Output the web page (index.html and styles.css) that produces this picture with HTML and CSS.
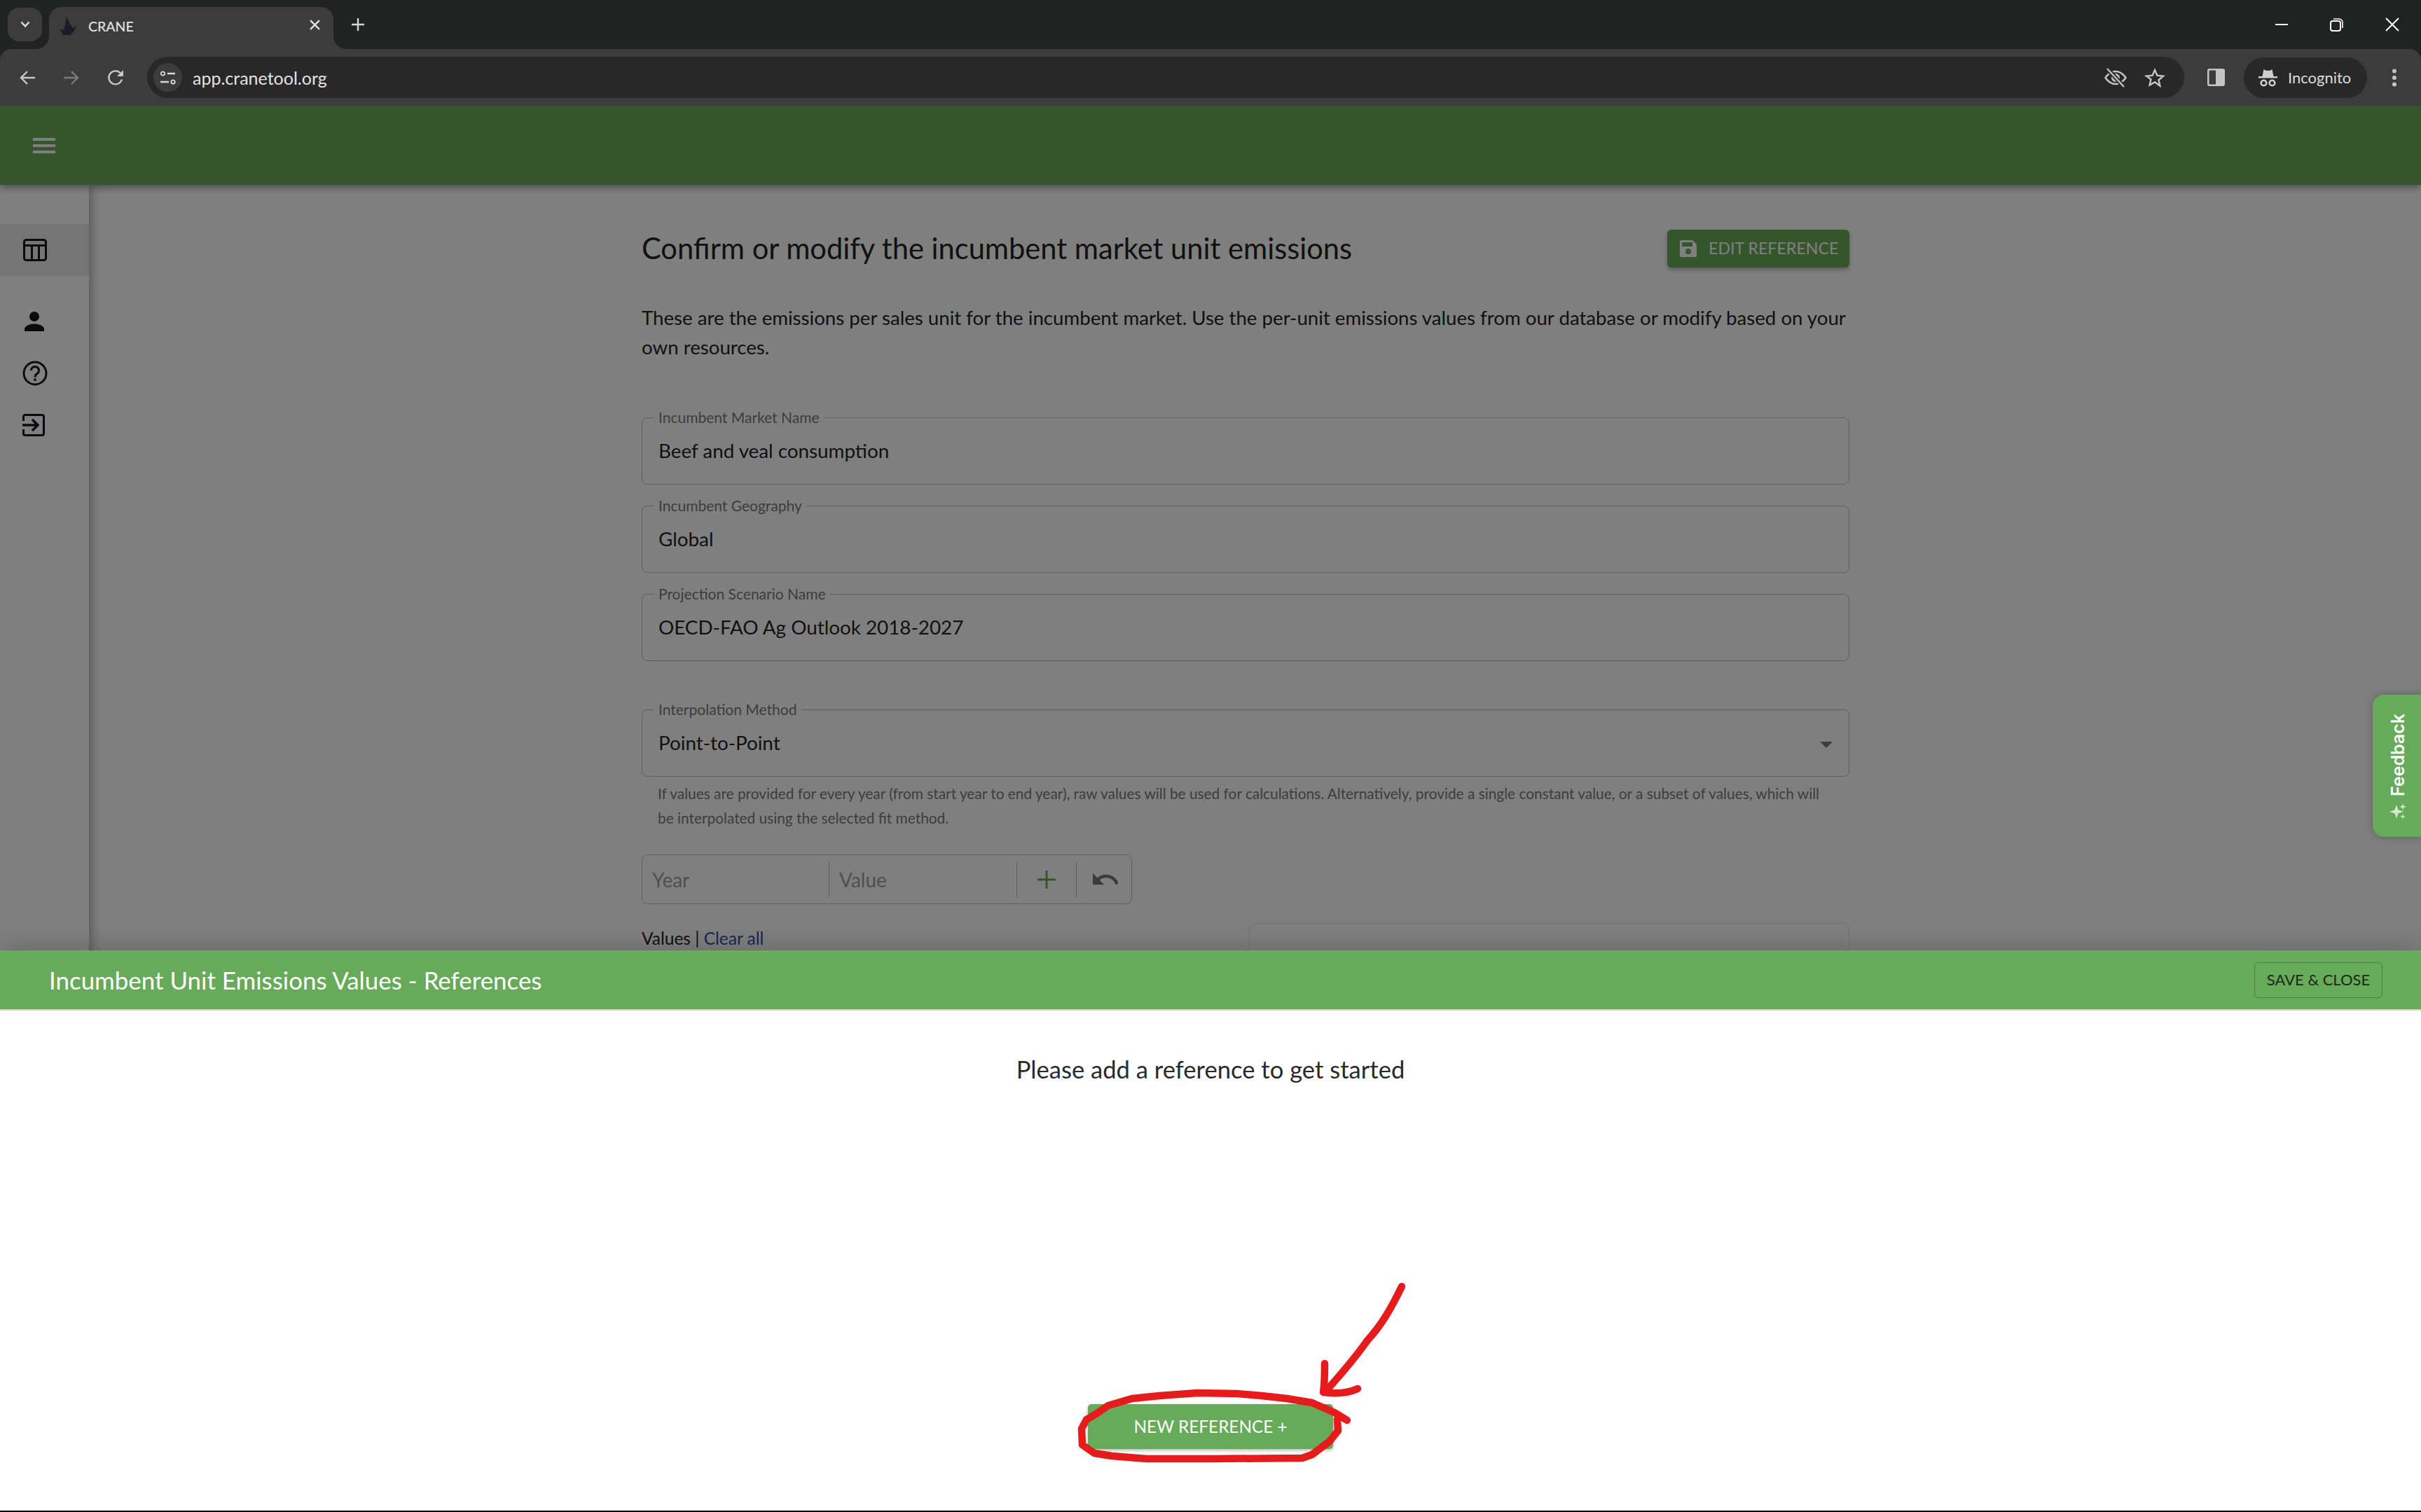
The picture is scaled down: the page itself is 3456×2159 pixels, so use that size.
FILE: index.html
```html
<!DOCTYPE html>
<html lang="en">
<head>
<meta charset="utf-8">
<title>CRANE</title>
<link rel="stylesheet" href="styles.css">
</head>
<body>
<div class="browser">
  <div class="tabstrip">
    <div class="tabsearch"><svg width="14" height="10" viewBox="0 0 14 10"><path d="M1.500 1.500 7 7.500l5.500-6" fill="none" stroke="#e3e3e3" stroke-width="2.400"/></svg></div>
    <div class="tab">
      <svg class="favicon" width="28" height="28" viewBox="0 0 28 28"><path d="M11 1l6 12 3 4 6-3-5 8-4 5H6L1 19l6 1z" fill="#1d1b2b"/></svg>
      <span class="tabtitle">CRANE</span>
      <svg class="tabclose" width="15" height="15" viewBox="0 0 14 14"><path d="M1 1l12 12M13 1 1 13" stroke="#e3e3e3" stroke-width="2.200"/></svg>
    </div>
    <svg class="newtab" width="18" height="18" viewBox="0 0 18 18"><path d="M9 0v18M0 9h18" stroke="#d8d8d8" stroke-width="2.400"/></svg>
    <div class="winctrls">
      <svg width="20" height="20" viewBox="0 0 20 20"><path d="M1 10h18" stroke="#fff" stroke-width="2"/></svg>
      <svg width="20" height="20" viewBox="0 0 20 20"><rect x="1" y="5" width="14" height="14" rx="3" fill="none" stroke="#fff" stroke-width="2"/><path d="M5 2h8a5 5 0 0 1 5 5v8" fill="none" stroke="#fff" stroke-width="1.600"/></svg>
      <svg width="20" height="20" viewBox="0 0 20 20"><path d="M1 1l18 18M19 1 1 19" stroke="#fff" stroke-width="2"/></svg>
    </div>
  </div>
  <div class="toolbar">
    <svg class="navicon" width="24" height="24" viewBox="0 0 24 24"><path d="M23 12H3M12 3l-9 9 9 9" fill="none" stroke="#c8c8c8" stroke-width="2.400"/></svg>
    <svg class="navicon" width="24" height="24" viewBox="0 0 24 24"><path d="M1 12h20M12 3l9 9-9 9" fill="none" stroke="#7c7c7c" stroke-width="2.400"/></svg>
    <svg class="navicon" width="24" height="24" viewBox="0 0 24 24"><path d="M21 14.500A9.500 9.500 0 1 1 18.500 5L21 7.500" fill="none" stroke="#c8c8c8" stroke-width="2.400"/><path d="M23 1v9h-9z" fill="#c8c8c8"/></svg>
    <div class="omnibox">
      <div class="sitebtn"><svg width="22" height="20" viewBox="0 0 22 20"><circle cx="3.500" cy="4" r="2.700" fill="none" stroke="#d8d8d8" stroke-width="1.800"/><path d="M10 4h11M0 16h12" stroke="#d8d8d8" stroke-width="2.400"/><circle cx="18" cy="16" r="2.700" fill="none" stroke="#d8d8d8" stroke-width="1.800"/></svg></div>
      <span class="url">app.cranetool.org</span>
      <svg class="omniicon" width="32" height="28" viewBox="0 0 32 28"><path d="M1.500 14S7 5 16 5s14.500 9 14.500 9S25 23 16 23 1.500 14 1.500 14z" fill="none" stroke="#c4c4c4" stroke-width="2.400"/><circle cx="16" cy="14" r="6" fill="#c4c4c4"/><path d="M4 1l24 26" stroke="#282828" stroke-width="6"/><path d="M4 1l24 26" stroke="#c4c4c4" stroke-width="2.400"/></svg>
      <svg class="omniicon" width="30" height="28" viewBox="0 0 30 28"><path d="M15 3l3.400 7.800 8.600.8-6.500 5.700 1.900 8.300L15 20.300l-7.400 4.300 1.900-8.300L3 11.600l8.600-.8z" fill="none" stroke="#c4c4c4" stroke-width="2.400"/></svg>
    </div>
    <svg class="sidepanel" width="25" height="25" viewBox="0 0 25 25"><rect x="1.250" y="1.250" width="22.500" height="22.500" rx="2" fill="none" stroke="#c4c4c4" stroke-width="2.500"/><rect x="12" y="1" width="12" height="23" fill="#c4c4c4"/></svg>
    <div class="incognito">
      <svg width="27" height="26" viewBox="0 0 27 26"><path d="M7.500 1l3 1.800h6L19.500 1l2 10h-16zM0 11h27v2.400H0z" fill="#d0d0d0"/><circle cx="7.500" cy="20.500" r="3.800" fill="none" stroke="#d0d0d0" stroke-width="2.600"/><circle cx="19.500" cy="20.500" r="3.800" fill="none" stroke="#d0d0d0" stroke-width="2.600"/></svg>
      <span>Incognito</span>
    </div>
    <svg class="kebab" width="8" height="26" viewBox="0 0 8 26"><circle cx="4" cy="3.500" r="3" fill="#c4c4c4"/><circle cx="4" cy="13" r="3" fill="#c4c4c4"/><circle cx="4" cy="22.500" r="3" fill="#c4c4c4"/></svg>
  </div>
</div>

<div class="app">
  <header class="appbar">
    <svg width="32" height="22" viewBox="0 0 32 22"><path d="M0 2h32M0 11h32M0 20h32" stroke="#fff" stroke-width="4"/></svg>
  </header>
  <div class="workspace">
    <nav class="sidebar">
      <div class="sideitem sideitem-active"><svg width="34" height="32" viewBox="0 0 34 32"><rect x="1.500" y="1.500" width="31" height="29" rx="3" fill="none" stroke="#14141f" stroke-width="3"/><path d="M2 9.500h30M12.500 9v21M22.500 9v21" stroke="#14141f" stroke-width="3"/></svg></div>
      <div class="sideitem sideitem-person"><svg width="28" height="28" viewBox="0 0 28 28"><circle cx="14" cy="7" r="7" fill="#14141f"/><path d="M0 28v-3c0-5 8-7.500 14-7.500S28 20 28 25v3z" fill="#14141f"/></svg></div>
      <div class="sideitem"><svg width="36" height="36" viewBox="0 0 36 36"><circle cx="18" cy="18" r="16" fill="none" stroke="#14141f" stroke-width="3"/><path d="M12.500 14a5.500 5.500 0 1 1 8.500 4.600c-2 1.400-3 2.400-3 4.900" fill="none" stroke="#14141f" stroke-width="3"/><rect x="16.400" y="25.500" width="3.200" height="3.400" fill="#14141f"/></svg></div>
      <div class="sideitem"><svg width="32" height="32" viewBox="0 0 32 32"><path d="M1.500 10V4a2.500 2.500 0 0 1 2.500-2.500h24A2.500 2.500 0 0 1 30.500 4v24a2.500 2.500 0 0 1-2.500 2.500H4A2.500 2.500 0 0 1 1.500 28v-6" fill="none" stroke="#14141f" stroke-width="3"/><path d="M0 16h22M14 8l8 8-8 8" fill="none" stroke="#14141f" stroke-width="3.400"/></svg></div>
    </nav>
    <main class="content">
      <div class="titlerow">
        <h1 class="title">Confirm or modify the incumbent market unit emissions</h1>
        <button class="editbtn"><svg width="24" height="24" viewBox="0 0 24 24"><path d="M2 0h16l6 6v16a2 2 0 0 1-2 2H2a2 2 0 0 1-2-2V2a2 2 0 0 1 2-2z" fill="#fff"/><rect x="3" y="3" width="15" height="6" fill="#6aac56"/><circle cx="12" cy="16" r="4" fill="#6aac56"/></svg><span class="editlabel">EDIT REFERENCE</span></button>
      </div>
      <p class="intro">These are the emissions per sales unit for the incumbent market. Use the per-unit emissions values from our database or modify based on your own resources.</p>
      <div class="fields">
        <fieldset class="field"><legend>Incumbent Market Name</legend><div class="fieldvalue">Beef and veal consumption</div></fieldset>
        <fieldset class="field"><legend>Incumbent Geography</legend><div class="fieldvalue">Global</div></fieldset>
        <fieldset class="field"><legend>Projection Scenario Name</legend><div class="fieldvalue">OECD-FAO Ag Outlook 2018-2027</div></fieldset>
      </div>
      <fieldset class="field field-select"><legend>Interpolation Method</legend><div class="fieldvalue">Point-to-Point</div><span class="caret"></span></fieldset>
      <p class="helper">If values are provided for every year (from start year to end year), raw values will be used for calculations. Alternatively, provide a single constant value, or a subset of values, which will be interpolated using the selected fit method.</p>
      <div class="lowerrow">
        <div class="valuescol">
          <div class="adder">
            <span class="addcell addcell-year">Year</span>
            <span class="addcell addcell-value">Value</span>
            <span class="addbtn addbtn-plus"><svg width="26" height="26" viewBox="0 0 26 26"><path d="M13 0v26M0 13h26" stroke="#6aac56" stroke-width="3"/></svg></span>
            <span class="addbtn addbtn-undo"><svg width="36" height="18" viewBox="2 7 20 10"><path d="M12.500 8c-2.650 0-5.050.99-6.900 2.600L2 7v9h9l-3.620-3.620c1.390-1.160 3.160-1.880 5.120-1.880 3.540 0 6.550 2.310 7.600 5.500l2.370-.78C21.080 11.030 17.150 8 12.500 8z" fill="#747474"/></svg></span>
          </div>
          <div class="valueslabel">Values <span class="pipe">|</span> <a class="clearall">Clear all</a></div>
        </div>
        <div class="chartbox"></div>
      </div>
    </main>
  </div>
  <div class="scrim"></div>
  <aside class="feedback">
    <span class="feedbacktext">Feedback</span>
    <svg class="sparkle" width="24" height="24" viewBox="0 0 24 24"><path d="M10 2l2.500 7.500L20 12l-7.500 2.500L10 22l-2.500-7.500L0 12l7.500-2.500z" fill="#d4e6cf"/><path d="M19 0l1.200 3.800L24 5l-3.800 1.200L19 10l-1.200-3.800L14 5l3.800-1.200z" fill="#d4e6cf"/><path d="M19 15l1 3 3 1-3 1-1 3-1-3-3-1 3-1z" fill="#d4e6cf"/></svg>
  </aside>
  <section class="drawer">
    <div class="drawerbar">
      <h2 class="drawertitle">Incumbent Unit Emissions Values - References</h2>
      <button class="savebtn">SAVE &amp; CLOSE</button>
    </div>
    <div class="drawerbody">
      <p class="emptymsg">Please add a reference to get started</p>
      <button class="newbtn">NEW REFERENCE +</button>
      <svg class="scribble" width="560" height="320" viewBox="0 0 560 320">
        <path class="ink" d="M521 37C505 70 492 92 472 114C450 145 432 165 412 187"/>
        <path class="ink" d="M411 147C411 160 411 175 409 188C430 191 445 189 458 183"/>
        <path class="ink" d="M443 228L425 217L393 203L357 197L321 193L286 190L229 189L175 193L136 197L102 207L86 218L71 227L64 240L65 263L82 275L107 279L157 283L250 283L379 282L393 277L418 258L430 243L429 227"/>
      </svg>
    </div>
  </section>
</div>
</body>
</html>
```

FILE: styles.css
```css
* { box-sizing: border-box; }
html, body { margin: 0; padding: 0; }
body {
  width: 3456px;
  height: 2159px;
  overflow: hidden;
  display: flex;
  flex-direction: column;
  font-family: "Lato", "Liberation Sans", sans-serif;
  background: #fff;
  color: #1a1a1a;
}

/* browser chrome */
.browser { flex: none; height: 151px; background: #202322; font-family: "Inter", "Roboto", sans-serif; }
.tabstrip {
  height: 70px;
  background: #202322;
  display: flex;
  align-items: flex-end;
  padding-left: 11px;
}
.tabsearch {
  width: 49px;
  height: 48px;
  margin-bottom: 11px;
  background: #3c3c3c;
  border-radius: 16px;
  display: flex;
  align-items: center;
  justify-content: center;
}
.tab {
  position: relative;
  width: 406px;
  height: 60px;
  margin-left: 10px;
  background: #3c3c3c;
  border-radius: 18px 18px 0 0;
  display: flex;
  align-items: center;
  padding: 0 16px 6px 14px;
}
.tab::before, .tab::after {
  content: "";
  position: absolute;
  bottom: 0;
  width: 18px;
  height: 18px;
}
.tab::before { left: -18px; background: radial-gradient(circle at 0 0, transparent 17.500px, #3c3c3c 18px); }
.tab::after { right: -18px; background: radial-gradient(circle at 100% 0, transparent 17.500px, #3c3c3c 18px); }
.favicon { flex: none; }
.tabtitle { margin-left: 14px; font-size: 19.500px; color: #e3e3e3; flex: 1; font-family: "Lato", sans-serif; font-weight: 500; }
.tabclose { flex: none; margin-bottom: 4px; margin-right: 3px; }
.newtab { align-self: flex-start; margin: 26px 0 0 26px; }
.winctrls {
  margin-left: auto;
  align-self: flex-start;
  display: flex;
  gap: 59px;
  padding: 25px 31px 0 0;
}
.toolbar {
  height: 81px;
  background: #3c3c3c;
  border-radius: 16px 16px 0 0;
  display: flex;
  align-items: center;
  padding-left: 27px;
}
.navicon { flex: none; margin-right: 39px; }
.omnibox {
  flex: 1;
  height: 59px;
  margin-left: -6px;
  background: #282828;
  border-radius: 30px;
  display: flex;
  align-items: center;
  padding: 0 27px 0 9px;
}
.sitebtn {
  width: 41px;
  height: 41px;
  border-radius: 50%;
  background: #3c3c3c;
  display: flex;
  align-items: center;
  justify-content: center;
}
.url { margin-left: 15px; font-size: 25px; color: #e3e3e3; flex: 1; font-family: "Lato", sans-serif; }
.omniicon { flex: none; margin-left: 25px; }
.sidepanel { flex: none; margin-left: 33px; }
.incognito {
  width: 176px;
  height: 58px;
  margin-left: 27px;
  background: #282828;
  border-radius: 29px;
  display: flex;
  align-items: center;
  padding-left: 21px;
  gap: 15px;
  font-size: 22px;
  color: #dcdcdc;
  font-family: "Lato", sans-serif;
}
.kebab { flex: none; margin: 0 34px 0 35px; }

/* app */
.app { position: relative; flex: 1; display: flex; flex-direction: column; min-height: 0; overflow: hidden; }
.appbar {
  flex: none;
  height: 113px;
  background: #6aac56;
  display: flex;
  align-items: center;
  padding-left: 47px;
  box-shadow: 0 4px 10px rgba(0, 0, 0, .4);
  position: relative;
  z-index: 2;
}
.workspace { flex: 1; display: flex; min-height: 0; }
.sidebar {
  flex: none;
  width: 127px;
  background: #fff;
  box-shadow: 4px 0 14px rgba(0, 0, 0, .3);
  padding-top: 56px;
  position: relative;
  z-index: 1;
}
.sideitem {
  height: 74px;
  display: flex;
  align-items: center;
  padding-left: 32px;
}
.sideitem-active { background: #ebebeb; padding-left: 33px; }
.sideitem-person { margin-top: 28px; padding-left: 35px; }
.content {
  width: 1724px;
  margin-left: 789px;
  padding-top: 64px;
  flex: none;
}
.titlerow { display: flex; align-items: center; justify-content: space-between; height: 54px; }
.title { margin: 0 0 3px; font-size: 41.600px; font-weight: 400; color: #222; }
.editbtn {
  display: flex;
  align-items: center;
  gap: 17px;
  width: 260px;
  height: 54px;
  padding: 0 0 0 18px;
  border: 0;
  border-radius: 6px;
  background: #6aac56;
  color: #fff;
  font: 400 23.200px "Lato", sans-serif;
  box-shadow: 0 3px 6px rgba(0, 0, 0, .3);
  white-space: nowrap;
}
.editlabel { padding-bottom: 2px; }
.intro { margin: 51px 0 0; font-size: 27.650px; line-height: 42px; color: #222; }
.fields { margin-top: 67px; display: flex; flex-direction: column; gap: 18px; }
.field {
  margin: 0;
  padding: 0 23px;
  height: 108px;
  border: 1px solid #bfbfbf;
  border-radius: 8px;
  position: relative;
  display: block;
  min-width: 0;
}
.field legend {
  padding: 0 6px;
  margin-left: -6px;
  font-size: 21px;
  line-height: 24px;
  color: #7a7a7a;
}
.fieldvalue { font-size: 27.800px; line-height: 40px; margin-top: 16px; color: #222; }
.field-select { margin-top: 57px; }
.caret {
  position: absolute;
  right: 23px;
  top: 34px;
  border-left: 9px solid transparent;
  border-right: 9px solid transparent;
  border-top: 9px solid #7a7a7a;
}
.helper {
  margin: 6px 0 0;
  padding: 0 23px;
  font-size: 20.850px;
  line-height: 35px;
  color: #7a7a7a;
}
.lowerrow { display: flex; justify-content: space-between; margin-top: 35px; }
.valuescol { width: 700px; }
.adder {
  width: 700px;
  height: 71px;
  border: 1px solid #bfbfbf;
  border-radius: 8px;
  display: flex;
  align-items: center;
}
.addcell {
  height: 50px;
  display: flex;
  align-items: center;
  padding-left: 14px;
  font-size: 28px;
  color: #a0a0a0;
  border-right: 1px solid #bfbfbf;
}
.addcell-year { width: 267px; }
.addcell-value { width: 268px; }
.addbtn { height: 50px; display: flex; align-items: center; justify-content: center; }
.addbtn-plus { width: 85px; border-right: 1px solid #bfbfbf; }
.addbtn-undo { width: 78px; padding-left: 3px; }
.valueslabel { margin-top: 33px; font-size: 24.500px; line-height: 32px; color: #222; }
.pipe { color: #222; }
.clearall { color: #3a4aa8; }
.chartbox {
  width: 857px;
  height: 200px;
  margin-top: 98px;
  border: 1px solid #e4e4e4;
  border-radius: 8px;
}

/* overlay layers */
.scrim { position: absolute; inset: 0; background: rgba(0, 0, 0, .5); z-index: 3; }
.feedback {
  position: absolute;
  right: 0;
  top: 841px;
  width: 69px;
  height: 203px;
  background: #66aa5a;
  border-radius: 16px 0 0 16px;
  box-shadow: 0 0 12px rgba(0, 0, 0, .25);
  z-index: 4;
  display: flex;
  flex-direction: column;
  align-items: center;
  justify-content: flex-end;
  padding: 0 0 24px 3px;
  gap: 10px;
  color: #fff;
}
.feedbacktext {
  writing-mode: vertical-rl;
  transform: rotate(180deg);
  font: 600 25px "Inter", sans-serif;
}
.sparkle { flex: none; }
.drawer {
  position: absolute;
  left: 0;
  right: 0;
  bottom: 0;
  height: 802px;
  z-index: 5;
  background: #fff;
  border-bottom: 2px solid #000;
  box-shadow: 0 -6px 30px rgba(0, 0, 0, .16);
  display: flex;
  flex-direction: column;
}
.drawerbar {
  flex: none;
  height: 86px;
  background: #66aa5a;
  border-bottom: 2px solid #d2d8d0;
  display: flex;
  align-items: center;
  justify-content: space-between;
  padding: 0 55px 0 70px;
}
.drawertitle { margin: 0; font-size: 34.900px; font-weight: 400; color: #fff; }
.savebtn {
  width: 183px;
  height: 51px;
  padding: 0 0 2px;
  border: 1px solid #4a7f40;
  border-radius: 6px;
  background: transparent;
  color: #1b2b17;
  font: 400 22px "Lato", sans-serif;
}
.drawerbody { flex: 1; position: relative; display: flex; flex-direction: column; align-items: center; }
.emptymsg { margin: 62px 0 0; font-size: 34.600px; line-height: 44px; color: #2a2a2a; }
.newbtn {
  width: 350px;
  height: 64px;
  margin-top: 456px;
  padding: 0 0 2px;
  border: 0;
  border-radius: 5px;
  background: #66aa5a;
  color: #fff;
  font: 400 24.300px "Lato", sans-serif;
  box-shadow: 0 2px 5px rgba(0, 0, 0, .3);
}
.scribble { position: absolute; left: 1480px; top: 357px; }
.ink { fill: none; stroke: #e61c1c; stroke-width: 10.500; stroke-linecap: round; stroke-linejoin: round; }
```
